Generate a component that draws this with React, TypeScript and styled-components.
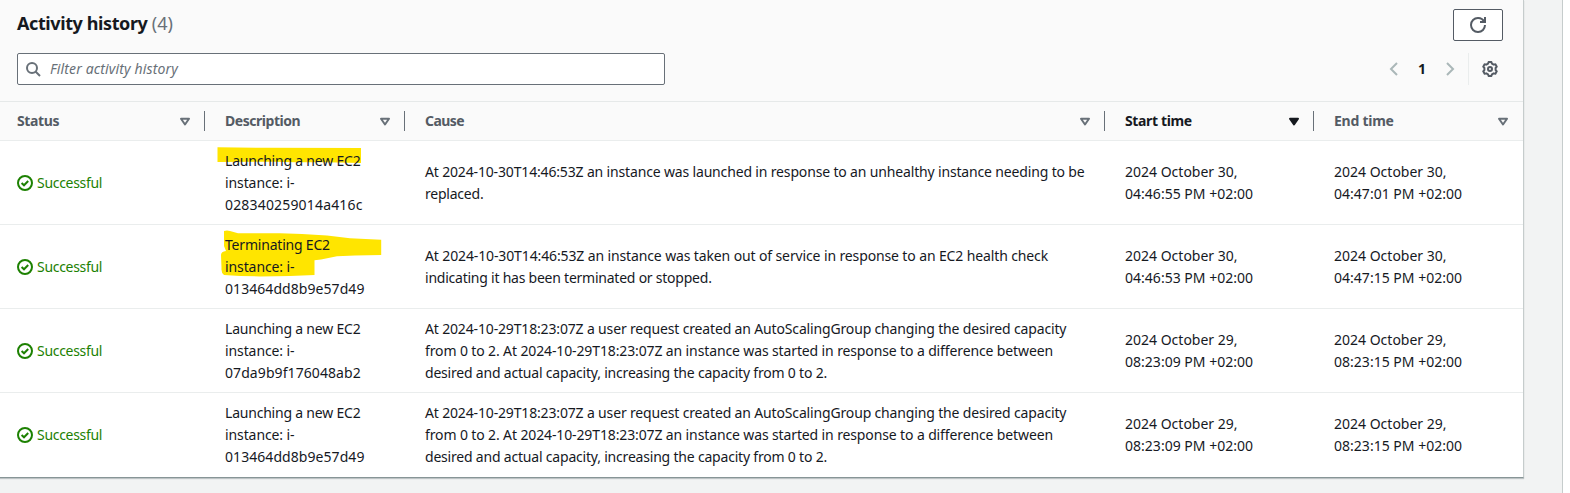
import React from "react";
import styled, { createGlobalStyle } from "styled-components";

const GlobalStyle = createGlobalStyle`
  *, *::before, *::after { box-sizing: border-box; }
  html, body { margin: 0; padding: 0; }
  body {
    background: #fff;
    color: #16191f;
    font: 400 14px/22px "Noto Sans", sans-serif;
    overflow: hidden;
  }
`;

const Page = styled.div`
  width: 1563px;
  height: 493px;
  background: #f2f3f3;
  border-right: 1px solid #c6cccc;
`;

const Panel = styled.section`
  width: 1524px;
  background: #fff;
  border-right: 1px solid #c6cccc;
  border-bottom: 1px solid #879596;
  box-shadow: 0 1px 1px rgba(0, 28, 36, 0.22);
`;

const PanelHeader = styled.header`
  height: 101px;
  padding: 9px 20px 0 17px;
  background: #fafafa;
`;

const Bar = styled.div<{ $gap?: number }>`
  display: flex;
  justify-content: space-between;
  align-items: flex-start;
  margin-top: ${(p) => p.$gap ?? 0}px;
`;

const Title = styled.h2`
  margin: 0;
  font-size: 18px;
  line-height: 28px;
  font-weight: 700;
  letter-spacing: -0.4px;
`;

const Counter = styled.span`
  font-weight: 400;
  letter-spacing: 0;
  color: #687078;
`;

const RefreshButton = styled.button`
  display: flex;
  align-items: center;
  justify-content: center;
  width: 50px;
  height: 32px;
  padding: 0;
  color: #545b64;
  background: #fff;
  border: 1px solid #545b64;
  border-radius: 2px;
`;

const SearchBox = styled.label`
  display: flex;
  align-items: center;
  gap: 9px;
  width: 648px;
  height: 32px;
  padding: 0 7px;
  color: #687078;
  background: #fff;
  border: 1px solid #687078;
  border-radius: 2px;
`;

const Placeholder = styled.span`
  font-style: italic;
  letter-spacing: 0.14px;
`;

const Pagination = styled.nav`
  display: flex;
  align-items: center;
  height: 32px;
  padding-right: 5px;
  color: #aab7b8;
`;

const PageNumber = styled.span`
  width: 40px;
  text-align: center;
  font-weight: 700;
  color: #16191f;
`;

const Settings = styled.span`
  display: flex;
  align-items: center;
  height: 32px;
  margin-left: 10px;
  padding-left: 13px;
  border-left: 1px solid #eaeded;
  color: #545b64;
`;

const Row = styled.div`
  display: grid;
  grid-template-columns: 205px 200px 700px 209px 209px;
  align-items: center;
  height: 84px;
  border-bottom: 1px solid #eaeded;
  &:last-child { border-bottom: 0; }
`;

const HeadRow = styled(Row)`
  height: 40px;
  background: #fafafa;
  border-top: 1px solid #e6e9e9;
`;

const HeadCell = styled.div<{ $active?: boolean; $spacing: number }>`
  display: flex;
  align-items: center;
  justify-content: space-between;
  height: 20px;
  padding: 0 11px 0 20px;
  font-weight: 700;
  letter-spacing: ${(p) => p.$spacing}px;
  color: ${(p) => (p.$active ? "#16191f" : "#545b64")};
  border-right: 1px solid #687078;
  &:first-child { padding-left: 17px; }
  &:last-child { border-right: 0; padding-right: 12px; }
`;

const Cell = styled.div`
  position: relative;
  padding-left: 20px;
  white-space: nowrap;
`;

const StatusCell = styled.div`
  display: flex;
  align-items: center;
  gap: 4px;
  padding-left: 17px;
  letter-spacing: -0.3px;
  color: #1d8102;
`;

const Line = styled.div<{ $spacing: number }>`
  position: relative;
  letter-spacing: ${(p) => p.$spacing}px;
`;

const Marker = styled.svg`
  position: absolute;
  left: 0;
  top: -9px;
  width: 200px;
  height: 84px;
  fill: #ffe500;
`;

const Glyph = styled.svg`
  display: block;
  flex: none;
  width: 16px;
  height: 16px;
  fill: none;
  stroke: currentColor;
  stroke-width: 2;
`;

const SortGlyph = styled(Glyph)<{ $active?: boolean }>`
  color: ${(p) => (p.$active ? "#16191f" : "#687078")};
  fill: ${(p) => (p.$active ? "#16191f" : "none")};
  stroke-linejoin: round;
`;

const polar = (radius: number, degrees: number) => {
  const a = (degrees * Math.PI) / 180;
  return `${(8 + radius * Math.cos(a)).toFixed(2)} ${(8 + radius * Math.sin(a)).toFixed(2)}`;
};

// Six flat-topped teeth around the hub.
const gearPath =
  "M" +
  [0, 1, 2, 3, 4, 5]
    .flatMap((k) => {
      const a = k * 60 - 90;
      return [polar(5.7, a - 20), polar(7.15, a - 11), polar(7.15, a + 11), polar(5.7, a + 20)];
    })
    .join("L") +
  "Z";

type TextLine = [text: string, spacing: number];

interface Activity {
  description: TextLine[];
  cause: TextLine[];
  start: TextLine[];
  end: TextLine[];
  marker?: string;
}

const launching: TextLine[] = [["Launching a new EC2", -0.21], ["instance: i-", -0.1]];
const capacityCause: TextLine[] = [
  ["At 2024-10-29T18:23:07Z a user request created an AutoScalingGroup changing the desired capacity", -0.157],
  ["from 0 to 2. At 2024-10-29T18:23:07Z an instance was started in response to a difference between", -0.124],
  ["desired and actual capacity, increasing the capacity from 0 to 2.", -0.2],
];

const stamp = (day: number, time: string): TextLine[] => [
  [`2024 October ${day},`, 0],
  [`${time} PM +02:00`, 0.02],
];

const activities: Activity[] = [
  {
    description: [...launching, ["028340259014a416c", 0.17]],
    cause: [
      ["At 2024-10-30T14:46:53Z an instance was launched in response to an unhealthy instance needing to be", -0.159],
      ["replaced.", -0.22],
    ],
    start: stamp(30, "04:46:55"),
    end: stamp(30, "04:47:01"),
    marker: "M12.5 6.2L60 6.8L156 7V22L120 21.2H90L70 20.8L12.5 21Z",
  },
  {
    description: [["Terminating EC2", -0.2], ["instance: i-", -0.1], ["013464dd8b9e57d49", 0.06]],
    cause: [
      ["At 2024-10-30T14:46:53Z an instance was taken out of service in response to an EC2 health check", -0.125],
      ["indicating it has been terminated or stopped.", -0.235],
    ],
    start: stamp(30, "04:46:53"),
    end: stamp(30, "04:47:15"),
    marker:
      "M19 6Q22 4.8 25 6L33 8.3H75L97 9L122 10.5L145 13.2L176.2 14.7V30L150 30.6L132 31.3L116 34.6L109.5 35.3V50L85 51L55 51.4L35 51L19 50Q16 48 16.5 43L16 30Q16 26.5 21 26L19 21Z",
  },
  {
    description: [...launching, ["07da9b9f176048ab2", 0.08]],
    cause: capacityCause,
    start: stamp(29, "08:23:09"),
    end: stamp(29, "08:23:15"),
  },
  {
    description: [...launching, ["013464dd8b9e57d49", 0.06]],
    cause: capacityCause,
    start: stamp(29, "08:23:09"),
    end: stamp(29, "08:23:15"),
  },
];

const columns = [
  { label: "Status", spacing: -0.38 },
  { label: "Description", spacing: -0.46 },
  { label: "Cause", spacing: -0.54 },
  { label: "Start time", spacing: -0.36, active: true },
  { label: "End time", spacing: -0.25 },
];

const TextCell = ({ lines, marker }: { lines: TextLine[]; marker?: string }) => (
  <Cell>
    {marker && (
      <Marker viewBox="0 0 200 84">
        <path d={marker} />
      </Marker>
    )}
    {lines.map(([text, spacing]) => (
      <Line key={text} $spacing={spacing}>{text}</Line>
    ))}
  </Cell>
);

export default function App() {
  return (
    <>
      <GlobalStyle />
      <Page>
        <Panel>
          <PanelHeader>
            <Bar>
              <Title>Activity history <Counter>(4)</Counter></Title>
              <RefreshButton aria-label="Refresh">
                <Glyph viewBox="0 0 16 16">
                  <path d="M10 5h5V0" />
                  <path d="M15 8a6.957 6.957 0 0 1-7 7 6.957 6.957 0 0 1-7-7 6.957 6.957 0 0 1 7-7 6.87 6.87 0 0 1 6.3 4" />
                </Glyph>
              </RefreshButton>
            </Bar>
            <Bar $gap={12}>
              <SearchBox>
                <Glyph viewBox="0 0 16 16">
                  <circle cx="7" cy="7" r="5" />
                  <path d="m15 15-4.5-4.5" />
                </Glyph>
                <Placeholder>Filter activity history</Placeholder>
              </SearchBox>
              <Pagination>
                <Glyph viewBox="0 0 16 16"><path d="M11 2 5 8l6 6" /></Glyph>
                <PageNumber>1</PageNumber>
                <Glyph viewBox="0 0 16 16"><path d="m5 2 6 6-6 6" /></Glyph>
                <Settings>
                  <Glyph viewBox="0 0 16 16" strokeLinejoin="round">
                    <path d={gearPath} />
                    <circle cx="8" cy="8" r="2" />
                  </Glyph>
                </Settings>
              </Pagination>
            </Bar>
          </PanelHeader>
          <HeadRow>
            {columns.map((c) => (
              <HeadCell key={c.label} $active={c.active} $spacing={c.spacing}>
                {c.label}
                <SortGlyph viewBox="0 0 16 16" $active={c.active}>
                  <path d="M4 5.7h8l-4 5.8z" />
                </SortGlyph>
              </HeadCell>
            ))}
          </HeadRow>
          {activities.map((a, i) => (
            <Row key={i}>
              <StatusCell>
                <Glyph viewBox="0 0 16 16">
                  <circle cx="8" cy="8" r="7" />
                  <path d="m4.6 8 2.4 2.3 4.2-4.3" />
                </Glyph>
                Successful
              </StatusCell>
              <TextCell lines={a.description} marker={a.marker} />
              <TextCell lines={a.cause} />
              <TextCell lines={a.start} />
              <TextCell lines={a.end} />
            </Row>
          ))}
        </Panel>
      </Page>
    </>
  );
}
